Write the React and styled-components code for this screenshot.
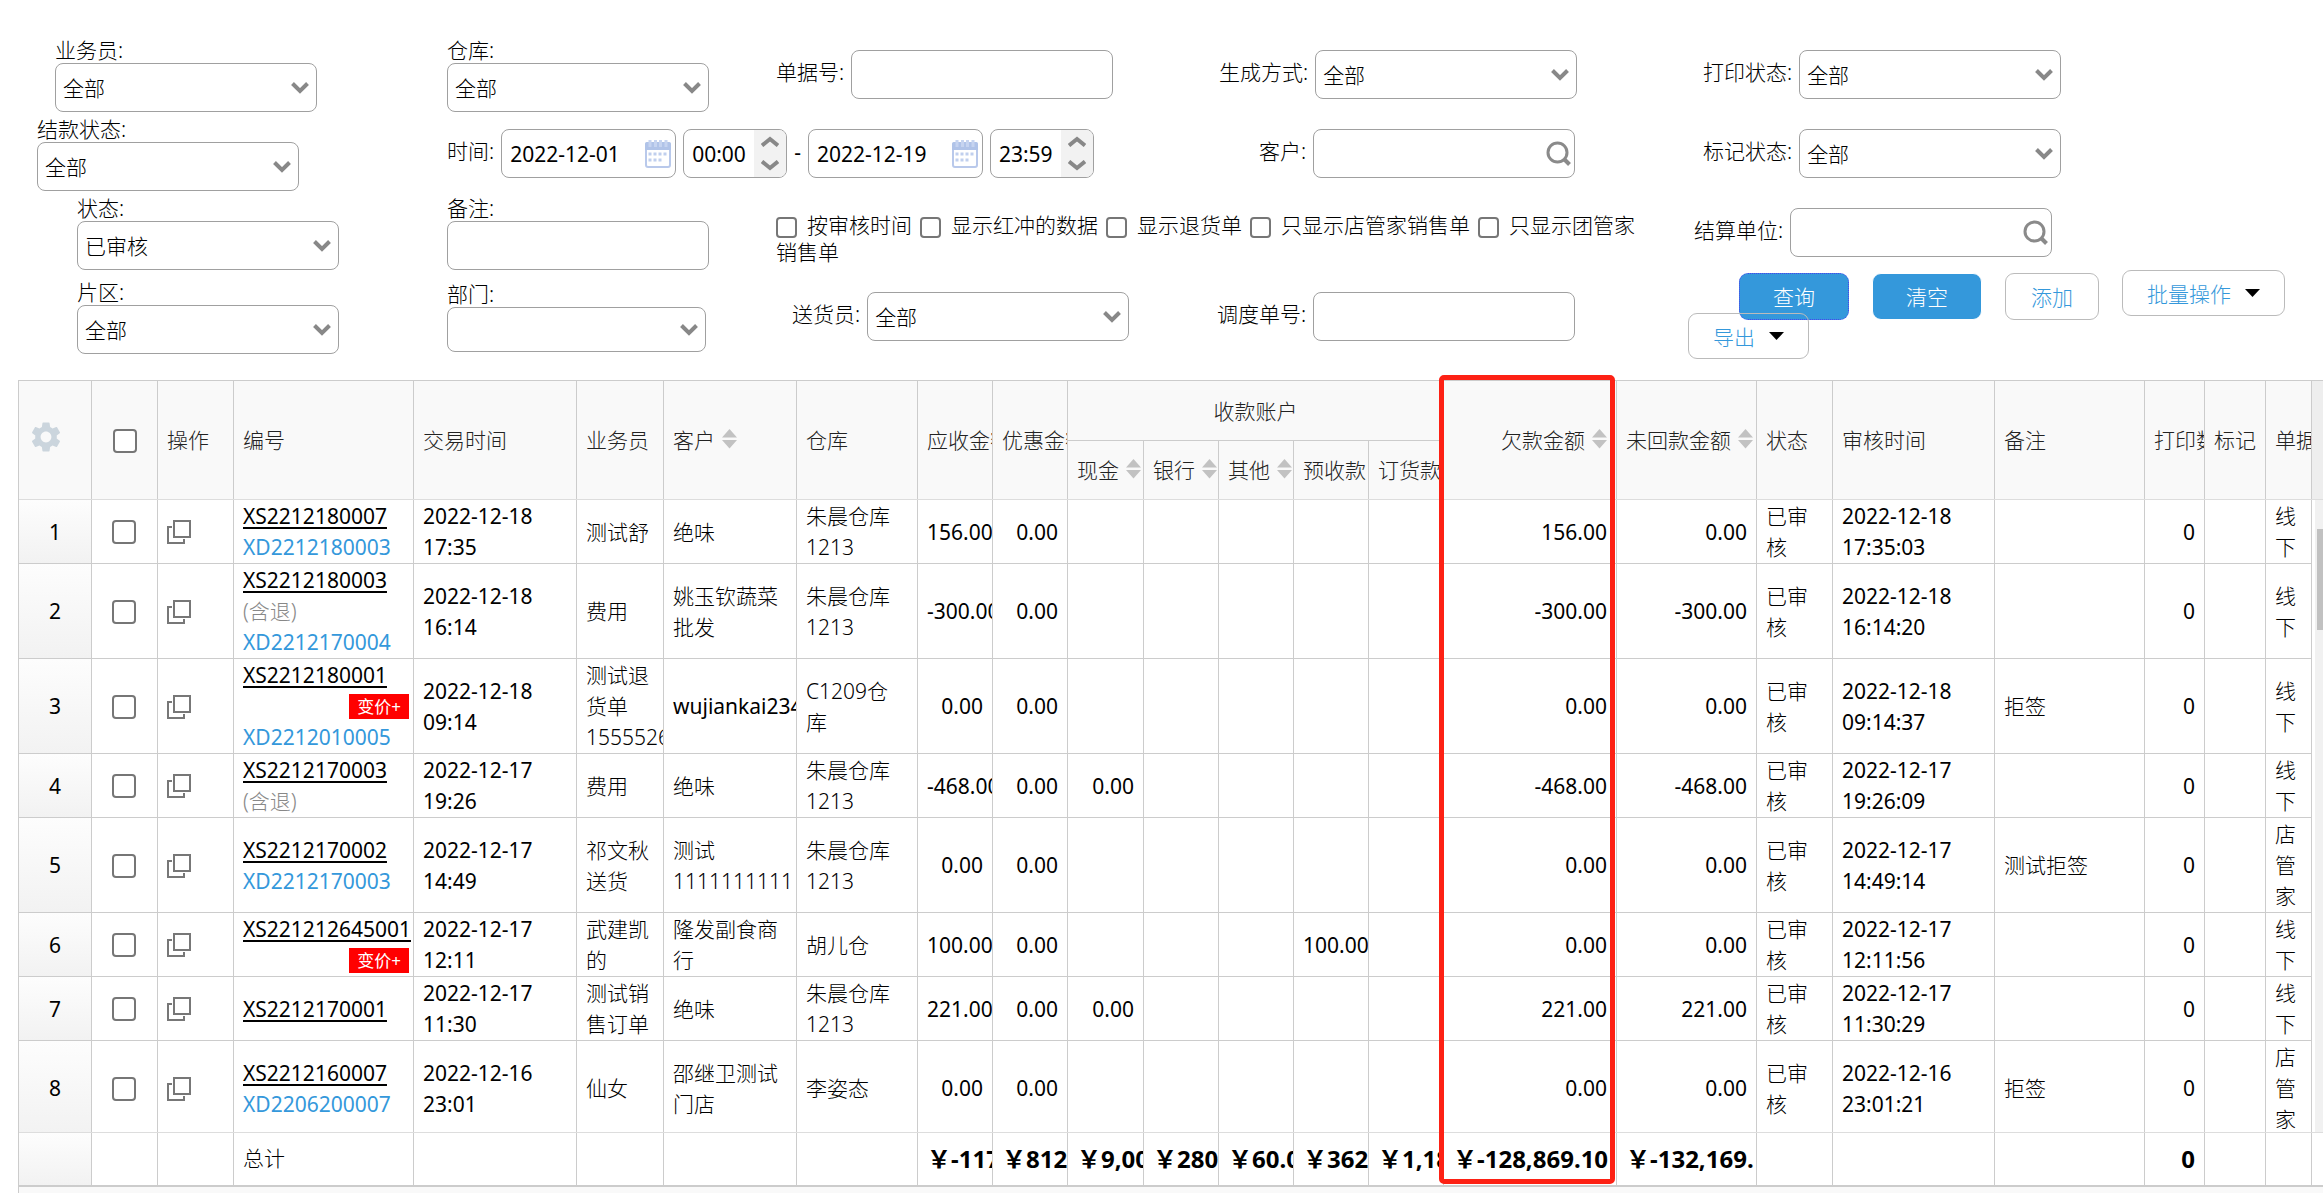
import React, { useState } from "react";
import styled, { createGlobalStyle } from "styled-components";
import { MdSettings } from "react-icons/md";

const GlobalStyle = createGlobalStyle`
  * {
    box-sizing: border-box;
  }
  body {
    margin: 0;
    background: #fff;
    color: #000;
  }
  body, input, select, button {
    font-family: "Noto Sans", "Noto Sans CJK SC", sans-serif;
    font-size: 21px;
    font-weight: 300;
  }
`;

const Page = styled.div`
  display: flex;
  flex-direction: column;
  min-height: 100vh;
  overflow: hidden;
`;

/* ---------- filters ---------- */

const Filters = styled.form`
  display: grid;
  grid-template-columns:
    minmax(0, 447fr) minmax(0, 329fr) minmax(0, 441fr)
    minmax(0, 471fr) minmax(0, 635fr);
  grid-template-rows: 75px 75px 80px 75px;
  row-gap: 4px;
  padding: 37px 0 26px;
`;

const Stacked = styled.div`
  grid-column: ${p => p.$col};
  grid-row: ${p => p.$row};
  display: flex;
  flex-direction: column;
  align-items: flex-start;
  padding-left: ${p => p.$indent || 0}px;
  padding-top: ${p => p.$top || 0}px;
`;

const Inline = styled.div`
  grid-column: ${p => p.$col};
  grid-row: ${p => p.$row};
  display: flex;
  align-items: center;
  align-self: start;
  gap: 7px;
  padding-top: 13px;
  padding-left: ${p => p.$indent || 0}px;
`;

const Label = styled.label`
  line-height: 26px;
  white-space: nowrap;
`;

const InlineLabel = styled(Label)`
  padding-bottom: 5px;
`;

const ControlBox = styled.div`
  position: relative;
  flex: none;
  width: ${p => p.$width || 262}px;
  height: ${p => p.$height || 49}px;
`;

const controlStyle = `
  display: block;
  width: 100%;
  height: 100%;
  margin: 0;
  border: 1px solid #a0a0a0;
  border-radius: 8px;
  background: #fff;
  color: #000;
  outline: none;
`;

const TextInput = styled.input`
  ${controlStyle}
  padding: 0 8px;
  font-weight: 400;
`;

const Select = styled.select`
  ${controlStyle}
  appearance: none;
  padding: 0 30px 0 7px;
`;

const ControlIcon = styled.svg`
  position: absolute;
  top: 0;
  bottom: 0;
  right: ${p => p.$right}px;
  margin: auto 0;
  pointer-events: none;
`;

const Spinner = styled.span`
  position: absolute;
  top: 1px;
  right: 1px;
  bottom: 1px;
  width: 32px;
  display: flex;
  flex-direction: column;
  align-items: center;
  justify-content: space-between;
  padding: 6px 0;
  border-radius: 0 7px 7px 0;
  background: #f2f2f2;
`;

const Dash = styled.span`
  padding: 0 0 4px;
  font-weight: 400;
`;

const CheckLine = styled.div`
  grid-column: 3 / 5;
  grid-row: 3;
  padding: 17px 40px 0 0;
  line-height: 27px;
`;

const CheckBox = styled.input`
  appearance: none;
  width: ${p => p.$size}px;
  height: ${p => p.$size}px;
  margin: 0;
  border: 2px solid #767676;
  border-radius: 4px;
  background: #fff;
  vertical-align: middle;

  &:checked {
    background: #3498db;
  }
`;

const CheckText = styled.label`
  margin: 0 8px 0 10px;
`;

const Actions = styled.div`
  grid-column: 5;
  grid-row: 4;
  margin: -9px 0 -10px;
`;

const ActionRow = styled.div`
  display: flex;
  align-items: flex-start;
  gap: 23px;
  padding-left: 51px;
`;

const Button = styled.button`
  height: 47px;
  margin: 3px 0 0;
  padding: 0 ${p => (p.$primary ? 33 : 25)}px 2px;
  border: 1px ${p => (p.$focus ? "dotted #4a3ff0" : p.$primary ? "solid #fff" : "solid #bbb")};
  border-radius: 9px;
  background: ${p => (p.$primary ? "#3498db" : "transparent")};
  color: ${p => (p.$primary ? "#fff" : "#3498db")};
  white-space: nowrap;
`;

const MenuButton = styled.button`
  position: relative;
  display: flex;
  align-items: center;
  gap: 14px;
  height: 46px;
  padding: 0 24px;
  border: 1px solid #bbb;
  border-radius: 9px;
  background: transparent;
  color: #3498db;
  white-space: nowrap;
`;

const ExportRow = styled.div`
  display: flex;
  margin-top: -7px;
`;

/* ---------- grid ---------- */

const Panel = styled.div`
  position: relative;
  margin-left: 18px;
  border-top: 1px solid #ccc;
  border-left: 1px solid #ccc;
`;

const Section = styled.div`
  display: flex;
  overflow: hidden;
  height: ${p => (p.$height ? p.$height + "px" : "auto")};
  border-bottom: ${p => p.$line};
`;

const Table = styled.table`
  flex: 1;
  width: 0;
  align-self: flex-start;
  table-layout: fixed;
  border-collapse: separate;
  border-spacing: 0;
`;

const Th = styled.th`
  height: ${p => p.$height || 118}px;
  padding: 0 9px 2px;
  overflow: hidden;
  border-right: 1px solid #ccc;
  border-bottom: ${p => (p.$line ? "1px solid #ccc" : "0")};
  background: #f9f9f9;
  color: #222;
  font-weight: 300;
  text-align: ${p => p.$align || "left"};
  white-space: nowrap;
`;

const Td = styled.td`
  padding: 1px 9px 0;
  overflow: hidden;
  border-right: 1px solid #ccc;
  border-bottom: 1px solid #ccc;
  font-weight: ${p => (p.$number || p.$code ? 400 : 300)};
  line-height: 31px;
  text-align: ${p => (p.$number ? "right" : "left")};
  white-space: ${p => (p.$number ? "nowrap" : "normal")};
`;

const GutterTd = styled(Td)`
  background: linear-gradient(#fdfdfd, #f2f2f2);
  text-align: center;
`;

const CheckTd = styled(Td)`
  padding: 0 10px 2px 9px;
  text-align: center;
`;

const TotalTd = styled(Td)`
  height: 52px;
  padding-bottom: 2px;
  border-bottom: 0;
  font-size: ${p => (p.$number ? 24 : 21)}px;
  font-weight: ${p => (p.$number ? 700 : 300)};
`;

const TotalGutter = styled(GutterTd)`
  height: 52px;
  border-bottom: 0;
`;

const HeadInner = styled.span`
  display: inline-flex;
  align-items: center;
  gap: 7px;
`;

const OrderLink = styled.a`
  display: block;
  color: #000;
  white-space: nowrap;
  text-decoration: underline 2px;
  text-underline-offset: 3px;
`;

const SourceLink = styled.a`
  display: block;
  color: #3498db;
  white-space: nowrap;
  text-decoration: none;
`;

const Refund = styled.div`
  color: #888;
  font-weight: 300;
`;

const BadgeLine = styled.div`
  display: flex;
  align-items: center;
  justify-content: flex-end;
  height: 31px;
  margin-right: -5px;
`;

const Badge = styled.span`
  padding: 0 8px;
  background: #f00;
  color: #fff;
  font-size: 17px;
  line-height: 25px;
`;

const IconButton = styled.button`
  display: block;
  padding: 0;
  border: 0;
  background: none;

  svg {
    display: block;
  }
`;

const SettingsButton = styled(IconButton)`
  padding-bottom: 4px;
`;

const HeadGap = styled.div`
  width: 11px;
  background: #eee;
`;

const ScrollTrack = styled.div`
  width: 11px;
  padding: 29px 0 0 5px;
  border-left: 3px solid #fff;
  background: #f1f1f1;
`;

const ScrollThumb = styled.div`
  height: 101px;
  margin-left: -3px;
  background: #c1c1c1;
`;

const FootGap = styled.div`
  width: 11px;
`;

const Highlight = styled.div`
  position: absolute;
  top: -6px;
  bottom: 3px;
  border: 5px solid #fd2114;
  border-radius: 5px;
  pointer-events: none;
`;

const Bottom = styled.div`
  flex: 1;
  margin-left: 18px;
  border-left: 1px solid #ccc;
  background: #f9f9f9;
`;

const WIDTHS = [
    73, 66, 76, 180, 163, 87, 133, 121, 75, 75, 76, 75, 75, 75, 75,
    173, 140, 76, 162, 150, 60, 61, 46
];
const DEBT_COL = 15;

const ROWS = [
    { id: "XS2212180007", source: "XD2212180003", time: "2022-12-18 17:35", sales: "测试舒", customer: "绝味", store: "朱晨仓库1213", due: "156.00", debt: "156.00", unpaid: "0.00", audit: "2022-12-18 17:35:03", type: "线下" },
    { id: "XS2212180003", refund: true, source: "XD2212170004", time: "2022-12-18 16:14", sales: "费用", customer: "姚玉钦蔬菜批发", store: "朱晨仓库1213", due: "-300.00", debt: "-300.00", unpaid: "-300.00", audit: "2022-12-18 16:14:20", type: "线下" },
    { id: "XS2212180001", changed: true, source: "XD2212010005", time: "2022-12-18 09:14", sales: "测试退货单15555260", customer: "wujiankai234", store: "C1209仓库", due: "0.00", debt: "0.00", unpaid: "0.00", audit: "2022-12-18 09:14:37", note: "拒签", type: "线下" },
    { id: "XS2212170003", refund: true, time: "2022-12-17 19:26", sales: "费用", customer: "绝味", store: "朱晨仓库1213", due: "-468.00", cash: "0.00", debt: "-468.00", unpaid: "-468.00", audit: "2022-12-17 19:26:09", type: "线下" },
    { id: "XS2212170002", source: "XD2212170003", time: "2022-12-17 14:49", sales: "祁文秋送货", customer: "测试1111111111", store: "朱晨仓库1213", due: "0.00", debt: "0.00", unpaid: "0.00", audit: "2022-12-17 14:49:14", note: "测试拒签", type: "店管家" },
    { id: "XS221212645001", changed: true, time: "2022-12-17 12:11", sales: "武建凯的", customer: "隆发副食商行", store: "胡儿仓", due: "100.00", advance: "100.00", debt: "0.00", unpaid: "0.00", audit: "2022-12-17 12:11:56", type: "线下" },
    { id: "XS2212170001", time: "2022-12-17 11:30", sales: "测试销售订单", customer: "绝味", store: "朱晨仓库1213", due: "221.00", cash: "0.00", debt: "221.00", unpaid: "221.00", audit: "2022-12-17 11:30:29", type: "线下" },
    { id: "XS2212160007", source: "XD2206200007", time: "2022-12-16 23:01", sales: "仙女", customer: "邵继卫测试门店", store: "李姿态", due: "0.00", debt: "0.00", unpaid: "0.00", audit: "2022-12-16 23:01:21", note: "拒签", type: "店管家" }
];

const TOTALS = ["￥-117", "￥812.", "￥9,000", "￥280.", "￥60.00", "￥362.", "￥1,180", "￥-128,869.10", "￥-132,169."];

const CHECKS = ["按审核时间", "显示红冲的数据", "显示退货单", "只显示店管家销售单", "只显示团管家销售单"];

const Chevron = ({ up }) => (
    <svg width="18" height="11" viewBox="0 0 18 11" fill="none" stroke="#888" strokeWidth="4">
        <path d={up ? "M1 9.500L9 3l8 6.500" : "M1 1.500L9 8l8-6.500"} />
    </svg>
);

const SelectControl = ({ id, value, width, height }) => (
    <ControlBox $width={width} $height={height}>
        <Select id={id} defaultValue={value}>
            <option value={value}>{value}</option>
        </Select>
        <ControlIcon $right={8} width="18" height="12" viewBox="0 0 18 12" fill="none" stroke="#888" strokeWidth="4">
            <path d="M1.5 1.5L9 9l7.5-7.5" />
        </ControlIcon>
    </ControlBox>
);

const SearchControl = ({ id }) => (
    <ControlBox>
        <TextInput id={id} type="text" />
        <ControlIcon $right={4} width="25" height="25" viewBox="0 0 25 25" fill="none" stroke="#8a8a8a">
            <circle cx="11.5" cy="11.5" r="9.5" strokeWidth="3" />
            <path d="M18 18l5.5 5.5" strokeWidth="4" />
        </ControlIcon>
    </ControlBox>
);

const DateControl = ({ id, value, label }) => (
    <ControlBox $width={175}>
        <TextInput id={id} type="text" defaultValue={value} aria-label={label} />
        <ControlIcon $right={5} width="26" height="28" viewBox="0 0 26 28">
            <rect x="1" y="3" width="24" height="24" rx="2" fill="#fff" stroke="#b9c9eb" strokeWidth="2" />
            <path d="M0 10V4a2 2 0 0 1 2-2h22a2 2 0 0 1 2 2v6z" fill="#b0c3e8" />
            <path d="M5 0v7M10.500 0v7M15.500 0v7M21 0v7" stroke="#c6d4f0" strokeWidth="3" />
            <path d="M3.500 14h19M3.500 20h14" stroke="#c0cfee" strokeWidth="3" strokeDasharray="3 2" />
        </ControlIcon>
    </ControlBox>
);

const TimeControl = ({ value, label }) => (
    <ControlBox $width={104}>
        <TextInput type="text" defaultValue={value} aria-label={label} />
        <Spinner>
            <Chevron up />
            <Chevron />
        </Spinner>
    </ControlBox>
);

const Caret = () => (
    <svg width="15" height="8" viewBox="0 0 15 8">
        <path d="M0 0h15L7.500 8z" fill="#000" />
    </svg>
);

const SortArrows = () => (
    <svg width="15" height="20" viewBox="0 0 15 20" fill="#c2c2c2">
        <path d="M7.500 0L15 8.500H0zM0 11h15l-7.500 8.500z" />
    </svg>
);

const CopyIcon = () => (
    <svg width="24" height="24" viewBox="0 0 24 24" fill="none" stroke="#777" strokeWidth="2">
        <path d="M7 1h16v16H7z" />
        <path d="M5 7H1v16h16v-4" />
    </svg>
);

const Cols = () => (
    <colgroup>
        {WIDTHS.map((w, i) => <col key={i} width={w} />)}
    </colgroup>
);

const Head = ({ text, sort, ...rest }) => (
    <Th {...rest}>
        <HeadInner>
            {text}
            {sort && <SortArrows />}
        </HeadInner>
    </Th>
);

const FilterForm = () => (
    <Filters onSubmit={e => e.preventDefault()}>
        <Stacked $col={1} $row={1} $indent={55}>
            <Label htmlFor="sales">业务员:</Label>
            <SelectControl id="sales" value="全部" />
        </Stacked>
        <Stacked $col={1} $row={2} $indent={37}>
            <Label htmlFor="settle">结款状态:</Label>
            <SelectControl id="settle" value="全部" />
        </Stacked>
        <Stacked $col={1} $row={3} $indent={77}>
            <Label htmlFor="status">状态:</Label>
            <SelectControl id="status" value="已审核" />
        </Stacked>
        <Stacked $col={1} $row={4} $indent={77}>
            <Label htmlFor="area">片区:</Label>
            <SelectControl id="area" value="全部" />
        </Stacked>

        <Stacked $col={2} $row={1}>
            <Label htmlFor="store">仓库:</Label>
            <SelectControl id="store" value="全部" />
        </Stacked>
        <Inline $col="2 / 4" $row={2}>
            <InlineLabel htmlFor="from">时间:</InlineLabel>
            <DateControl id="from" value="2022-12-01" />
            <TimeControl value="00:00" label="开始时间" />
            <Dash>-</Dash>
            <DateControl id="to" value="2022-12-19" label="结束日期" />
            <TimeControl value="23:59" label="结束时间" />
        </Inline>
        <Stacked $col={2} $row={3}>
            <Label htmlFor="note">备注:</Label>
            <ControlBox><TextInput id="note" type="text" /></ControlBox>
        </Stacked>
        <Stacked $col={2} $row={4} $top={2}>
            <Label htmlFor="dept">部门:</Label>
            <SelectControl id="dept" value="" width={259} height={45} />
        </Stacked>

        <Inline $col={3} $row={1}>
            <InlineLabel htmlFor="billNo">单据号:</InlineLabel>
            <ControlBox><TextInput id="billNo" type="text" /></ControlBox>
        </Inline>
        <CheckLine>
            {CHECKS.map((text, i) => (
                <React.Fragment key={text}>
                    <CheckBox id={"check" + i} type="checkbox" $size={21} />
                    <CheckText htmlFor={"check" + i}>{text}</CheckText>
                </React.Fragment>
            ))}
        </CheckLine>
        <Inline $col={3} $row={4} $indent={16}>
            <InlineLabel htmlFor="courier">送货员:</InlineLabel>
            <SelectControl id="courier" value="全部" />
        </Inline>

        <Inline $col={4} $row={1} $indent={2}>
            <InlineLabel htmlFor="origin">生成方式:</InlineLabel>
            <SelectControl id="origin" value="全部" />
        </Inline>
        <Inline $col={4} $row={2} $indent={42}>
            <InlineLabel htmlFor="customer">客户:</InlineLabel>
            <SearchControl id="customer" />
        </Inline>
        <Inline $col={4} $row={4}>
            <InlineLabel htmlFor="dispatch">调度单号:</InlineLabel>
            <ControlBox><TextInput id="dispatch" type="text" /></ControlBox>
        </Inline>

        <Inline $col={5} $row={1} $indent={15}>
            <InlineLabel htmlFor="print">打印状态:</InlineLabel>
            <SelectControl id="print" value="全部" />
        </Inline>
        <Inline $col={5} $row={2} $indent={15}>
            <InlineLabel htmlFor="mark">标记状态:</InlineLabel>
            <SelectControl id="mark" value="全部" />
        </Inline>
        <Inline $col={5} $row={3} $indent={6}>
            <InlineLabel htmlFor="unit">结算单位:</InlineLabel>
            <SearchControl id="unit" />
        </Inline>
        <Actions>
            <ActionRow>
                <Button type="submit" $primary $focus>查询</Button>
                <Button type="reset" $primary>清空</Button>
                <Button type="button">添加</Button>
                <MenuButton type="button">批量操作<Caret /></MenuButton>
            </ActionRow>
            <ExportRow>
                <MenuButton type="button">导出<Caret /></MenuButton>
            </ExportRow>
        </Actions>
    </Filters>
);

const OrderRow = ({ row, index, checked, onCheck }) => (
    <tr>
        <GutterTd $code>{index + 1}</GutterTd>
        <CheckTd>
            <CheckBox type="checkbox" $size={24} checked={checked} onChange={onCheck} aria-label={row.id} />
        </CheckTd>
        <Td><IconButton type="button" aria-label="复制"><CopyIcon /></IconButton></Td>
        <Td $code>
            <OrderLink href="#order">{row.id}</OrderLink>
            {row.refund && <Refund>(含退)</Refund>}
            {row.changed && <BadgeLine><Badge>变价+</Badge></BadgeLine>}
            {row.source && <SourceLink href="#source">{row.source}</SourceLink>}
        </Td>
        <Td $code>{row.time}</Td>
        <Td>{row.sales}</Td>
        <Td $code={row.customer.startsWith("w")}>{row.customer}</Td>
        <Td>{row.store}</Td>
        <Td $number>{row.due}</Td>
        <Td $number>0.00</Td>
        <Td $number>{row.cash}</Td>
        <Td />
        <Td />
        <Td $number>{row.advance}</Td>
        <Td />
        <Td $number>{row.debt}</Td>
        <Td $number>{row.unpaid}</Td>
        <Td>已审核</Td>
        <Td $code>{row.audit}</Td>
        <Td>{row.note}</Td>
        <Td $number>0</Td>
        <Td />
        <Td>{row.type}</Td>
    </tr>
);

const App = () => {
    const [selected, setSelected] = useState([]);
    const toggle = id => {
        setSelected(selected.includes(id) ? selected.filter(s => s !== id) : [...selected, id]);
    };
    const toggleAll = () => {
        setSelected(selected.length === ROWS.length ? [] : ROWS.map(r => r.id));
    };

    const sum = list => list.reduce((a, b) => a + b, 0);
    const total = sum(WIDTHS) + 11;
    const debtLeft = ((sum(WIDTHS.slice(0, DEBT_COL)) - 5) / total) * 100;
    const debtWidth = ((WIDTHS[DEBT_COL] + 3) / total) * 100;

    return (
        <Page>
            <GlobalStyle />
            <FilterForm />
            <Panel>
                <Section $line="1px solid #ddd">
                    <Table>
                        <Cols />
                        <thead>
                            <tr>
                                <Th rowSpan={2}>
                                    <SettingsButton type="button" aria-label="设置">
                                        <MdSettings size={36} color="#cbd5dd" />
                                    </SettingsButton>
                                </Th>
                                <Th rowSpan={2} $align="center">
                                    <CheckBox
                                        type="checkbox"
                                        $size={24}
                                        aria-label="全选"
                                        checked={selected.length === ROWS.length}
                                        onChange={toggleAll}
                                    />
                                </Th>
                                <Head rowSpan={2} text="操作" />
                                <Head rowSpan={2} text="编号" />
                                <Head rowSpan={2} text="交易时间" />
                                <Head rowSpan={2} text="业务员" />
                                <Head rowSpan={2} text="客户" sort />
                                <Head rowSpan={2} text="仓库" />
                                <Head rowSpan={2} text="应收金额" />
                                <Head rowSpan={2} text="优惠金额" />
                                <Head colSpan={5} text="收款账户" $align="center" $height={60} $line />
                                <Head rowSpan={2} text="欠款金额" sort $align="right" />
                                <Head rowSpan={2} text="未回款金额" sort />
                                <Head rowSpan={2} text="状态" />
                                <Head rowSpan={2} text="审核时间" />
                                <Head rowSpan={2} text="备注" />
                                <Head rowSpan={2} text="打印数" />
                                <Head rowSpan={2} text="标记" />
                                <Head rowSpan={2} text="单据" />
                            </tr>
                            <tr>
                                <Head $height={58} text="现金" sort />
                                <Head $height={58} text="银行" sort />
                                <Head $height={58} text="其他" sort />
                                <Head $height={58} text="预收款" />
                                <Head $height={58} text="订货款" />
                            </tr>
                        </thead>
                    </Table>
                    <HeadGap />
                </Section>
                <Section $height={633} $line="1px solid #ddd">
                    <Table>
                        <Cols />
                        <tbody>
                            {ROWS.map((row, i) => (
                                <OrderRow
                                    key={row.id}
                                    row={row}
                                    index={i}
                                    checked={selected.includes(row.id)}
                                    onCheck={() => toggle(row.id)}
                                />
                            ))}
                        </tbody>
                    </Table>
                    <ScrollTrack>
                        <ScrollThumb />
                    </ScrollTrack>
                </Section>
                <Section $line="2px solid #ccc">
                    <Table>
                        <Cols />
                        <tbody>
                            <tr>
                                <TotalGutter />
                                <TotalTd />
                                <TotalTd />
                                <TotalTd>总计</TotalTd>
                                <TotalTd />
                                <TotalTd />
                                <TotalTd />
                                <TotalTd />
                                {TOTALS.map(t => <TotalTd key={t} $number>{t}</TotalTd>)}
                                <TotalTd />
                                <TotalTd />
                                <TotalTd />
                                <TotalTd $number>0</TotalTd>
                                <TotalTd />
                                <TotalTd />
                            </tr>
                        </tbody>
                    </Table>
                    <FootGap />
                </Section>
                <Highlight style={{ left: debtLeft + "%", width: debtWidth + "%" }} />
            </Panel>
            <Bottom />
        </Page>
    );
};

export default App;
